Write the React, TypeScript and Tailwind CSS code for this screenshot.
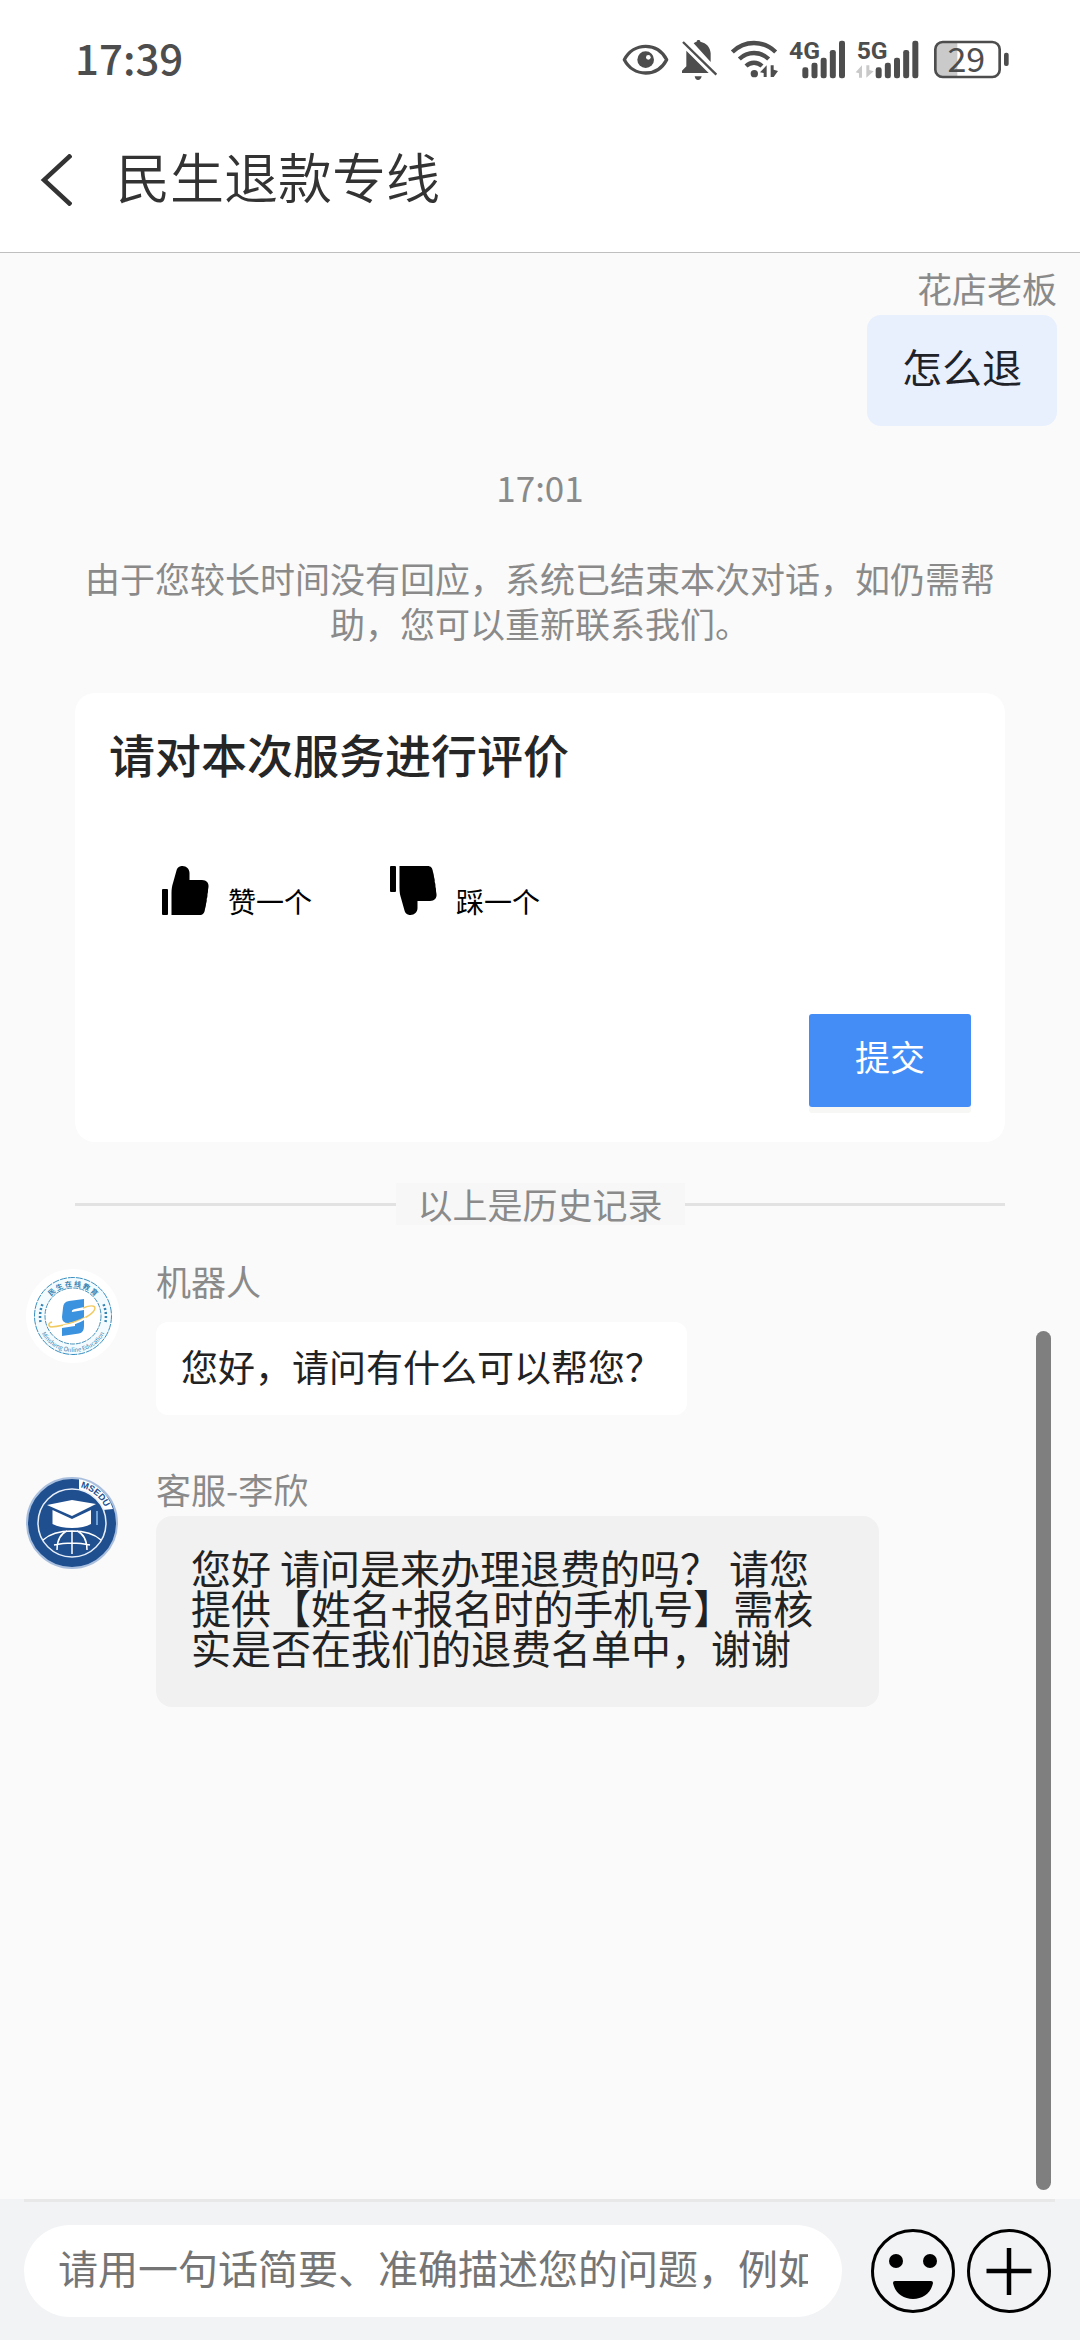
import { ReactNode } from 'react';
import clsx from 'clsx';

const FONT = "font-['Noto_Sans_CJK_SC',sans-serif]";

function EyeIcon() {
  return (
    <svg width="46" height="40" viewBox="69 60 138 120" className="overflow-visible">
      <path d="M73 119 C86 94 110 79 137 79 C164 79 187 94 200 119 C187 144 164 159 137 159 C110 159 86 144 73 119 Z" fill="none" stroke="#4d4d4d" strokeWidth="10" strokeLinejoin="round" />
      <circle cx="137" cy="119" r="25" fill="#4d4d4d" />
      <circle cx="145" cy="112" r="7" fill="#fff" />
    </svg>
  );
}

function MutedBellIcon() {
  return (
    <svg width="38" height="40" viewBox="243 60 114 120" fill="#4d4d4d">
      <path d="M281 70 C284 67 287 66 290 65 C290 58 301 58 301 65 C320 69 331 82 332 100 V126 Z" />
      <path d="M259 92 L326 159 H246 V152 L259 139 Z" />
      <path d="M284 169 H305 C303 177 300 180 294 180 C288 180 286 177 284 169 Z" />
      <path d="M249 66 L349 164" stroke="#4d4d4d" strokeWidth="7" />
    </svg>
  );
}

function WifiIcon() {
  return (
    <svg width="46" height="40" viewBox="393 60 138 120" fill="none" stroke="#4d4d4d" strokeWidth="13" className="overflow-visible">
      <path d="M397 96 C434 60 490 60 527 96" />
      <path d="M418 117 C443 93 481 93 506 117" />
      <path d="M438 138 C452 125 472 125 486 138" />
      <circle cx="463" cy="161" r="11" fill="#4d4d4d" stroke="none" />
      <path d="M480 157 L500 136 V171 H491 V159 Z M512 136 V171 H521 L534 153 L521 149 V136 Z" fill="#4d4d4d" stroke="none" />
    </svg>
  );
}

function SignalBars({ x }: { x: number }) {
  return (
    <g fill="#4d4d4d">
      {[142, 128, 113, 90, 62].map((top, i) => (
        <rect key={top} x={x + i * 27.5} y={top} width="18" height={175 - top} rx="7" />
      ))}
    </g>
  );
}

function Signal4G() {
  return (
    <svg width="56" height="40" viewBox="567 60 168 120" className="overflow-visible">
      <text x="567" y="116" fontSize="74" fontWeight="700" fill="#4d4d4d" className="font-['Liberation_Sans_Narrow','Roboto',sans-serif]">4G</text>
      <SignalBars x={607} />
    </svg>
  );
}

function Signal5G() {
  return (
    <svg width="65" height="40" viewBox="771 60 195 120" className="overflow-visible">
      <text x="770" y="116" fontSize="74" fontWeight="700" fill="#4d4d4d" className="font-['Liberation_Sans_Narrow','Roboto',sans-serif]">5G</text>
      <path d="M767 157 L786 136 V173 H777 V160 Z M799 136 V173 L821 154 L808 150 V136 Z" fill="#c9c9c9" />
      <SignalBars x={827} />
    </svg>
  );
}

function BatteryIcon() {
  return (
    <svg width="75" height="40" viewBox="1002 60 225 120" className="overflow-visible">
      <path d="M1028 64 H1072 V172 H1028 Q1005 172 1005 149 V87 Q1005 64 1028 64 Z" fill="#cacaca" />
      <rect x="1006" y="66" width="193" height="105" rx="22" fill="none" stroke="#4d4d4d" strokeWidth="8" />
      <rect x="1212" y="98" width="14" height="40" rx="6" fill="#4d4d4d" />
      <text x="1099" y="155" fontSize="102" textAnchor="middle" fill="#4d4d4d" className="font-['Noto_Sans_CJK_SC',sans-serif]">29</text>
    </svg>
  );
}

function StatusBar() {
  return (
    <div className="flex h-30 items-center justify-between bg-white pl-[75px] pr-[71px]">
      <span className="pb-1.5 text-[42px] leading-10 font-medium text-[#4d4d4d]">17:39</span>
      <div className="flex items-center gap-3">
        <EyeIcon />
        <MutedBellIcon />
        <WifiIcon />
        <Signal4G />
        <Signal5G />
        <BatteryIcon />
      </div>
    </div>
  );
}

function Header() {
  return (
    <header className="flex items-center border-b border-[#bfbfbf] bg-white pb-5 pl-10">
      <button type="button" aria-label="返回" className="pt-2">
        <svg width="32" height="52" viewBox="0 0 32 52" fill="none" stroke="#333" strokeWidth="4.500">
          <path d="M31 1 L4 26 L31 51" />
        </svg>
      </button>
      <h1 className="pl-11 text-[54px] leading-[112px] font-[350] text-[#333]">民生退款专线</h1>
    </header>
  );
}

function ThumbIcon({ down }: { down?: boolean }) {
  return (
    <svg width="47" height="49" viewBox="0 0 47 49" className={clsx(down && '-scale-y-100')}>
      <rect x="0" y="23" width="6" height="26" rx="1" />
      <path d="M9.5 49 V27 C9.5 23 10 20 11 17 L14.5 4.5 C15.5 1 18 0 20.5 0 C24.5 0 27.5 3 27.5 7 V14 H40 C44.5 14 47 17 46.5 21 L46 24 C46 26 46 26.5 45.5 28 C45.5 30 45.5 31 44.7 33 C45 35 44.5 36 44 38 C44 40 43.5 41 43 43 C42.5 47 41 49 37.5 49 Z" />
    </svg>
  );
}

function RatingCard() {
  return (
    <form className="mt-12 flex flex-col rounded-[20px] bg-white px-[34px] pt-[30px] pb-[35px]">
      <h2 className="text-[46px] leading-[60px] font-medium text-[#262626]">请对本次服务进行评价</h2>
      <div className="mt-[83px] flex gap-[78px] pl-[53px] text-[28px] leading-7 text-black">
        <label className="flex items-end gap-[19px]">
          <input type="radio" name="rating" value="up" className="sr-only" />
          <ThumbIcon />
          赞一个
        </label>
        <label className="flex items-end gap-[19px]">
          <input type="radio" name="rating" value="down" className="sr-only" />
          <ThumbIcon down />
          踩一个
        </label>
      </div>
      <button type="submit" className="mt-[99px] h-[93px] self-end rounded-[3px] bg-[#448df7] px-[46px] pb-2.5 text-[35px] leading-10 text-white shadow-[0_6px_0_#f7f7f5]">
        提交
      </button>
    </form>
  );
}

function RobotAvatar() {
  return (
    <svg width="94" height="94" viewBox="-47 -47 94 94" className="shrink-0">
      <circle r="47" fill="#fff" />
      <circle r="38.5" fill="#f3fbfe" stroke="#3a8fc0" strokeWidth="1" strokeDasharray="7 1" />
      <circle r="28" fill="#fff" stroke="#4a93bb" strokeWidth="1" strokeDasharray="5 1" />
      <path id="seal-top" d="M-29.5 0 A29.5 29.5 0 0 1 29.5 0" fill="none" />
      <path id="seal-bottom" d="M-36 0 A36 36 0 0 0 36 0" fill="none" />
      <path d="M-32.5 6 A33 33 0 0 1 -30 -13 M32.5 6 A33 33 0 0 0 30 -13" fill="none" stroke="#3585b5" strokeWidth="2.5" strokeDasharray="2 2" />
      <text fontSize="7" fontWeight="700" fill="#3585b5" textAnchor="middle">
        <textPath href="#seal-top" startOffset="50%">民 生 在 线 教 育</textPath>
      </text>
      <text fontSize="6" fill="#3585b5" textAnchor="middle">
        <textPath href="#seal-bottom" startOffset="50%">Minsheng Online Education</textPath>
      </text>
      <path d="M-10 -8 Q-10 -14 -4 -15 L11 -17 V-9 L2 -7 Q-2 -6 -1 -4 L11 -6 V10 Q11 17 6 17.5 L-11 20 V12 L2 10 V6 L-5 7 Q-11 7 -11 1 Z" fill="#3b92de" />
      <path d="M10 -8 C20 -12 25 -10 20 -4 C14 3 -8 10 -22 11 C-25 10 -25 7 -21 6" fill="none" stroke="#f1cb62" strokeWidth="1.5" />
      <path d="M-10 10 C0 9 8 5 13 2" fill="none" stroke="#fff" strokeWidth="2" />
    </svg>
  );
}

function AgentAvatar() {
  return (
    <svg width="92" height="92" viewBox="-46 -46 92 92" className="shrink-0">
      <circle r="45" fill="#204f90" stroke="#a9bfdd" strokeWidth="2" />
      <path d="M7 -44 A44 44 0 0 1 41 -14 L31 -13 A34 34 0 0 0 7 -33 Z" fill="#fff" />
      <circle r="34" fill="#204f90" stroke="#e6eef8" strokeWidth="1.5" />
      <path id="badge-arc" d="M7.5 -35.8 A36.5 36.5 0 0 1 36.5 0" fill="none" />
      <text fontSize="9" fontWeight="700" fill="#204f90" className="font-['Liberation_Sans',sans-serif]">
        <textPath href="#badge-arc" startOffset="1">MSEDU</textPath>
      </text>
      <path d="M-25 -18 L0 -23 L24 -19 L0 -7 Z" fill="#fff" />
      <path d="M-19.5 -13 L0 -4 L19 -13 V1 Q12 5 0 5 Q-12 5 -19.5 1 Z" fill="#fff" />
      <path d="M25 -12 V2" stroke="#6fa3d8" strokeWidth="2" />
      <g fill="none" stroke="#fff" strokeWidth="1.5">
        <path d="M-29 17 C-16 5 16 5 29 17 M-18 22 Q0 18 18 22 M0 8 V31 M-15 27 C-15 18 -12 11 -5 8 M15 27 C15 18 12 11 5 8" />
      </g>
    </svg>
  );
}

interface MessageProps {
  avatar: ReactNode;
  name: string;
  children: ReactNode;
  className?: string;
}

function Message({ avatar, name, children, className }: MessageProps) {
  return (
    <div className={clsx('flex pl-0.5', className)}>
      <div className="w-[130px] shrink-0 pt-2">{avatar}</div>
      <div className="flex flex-col items-start">
        <div className="text-[35px] leading-10 text-[#8a8a8a]">{name}</div>
        {children}
      </div>
    </div>
  );
}

function Composer() {
  return (
    <footer className="bg-[#f2f3f5] pr-[29px] pb-[23px] pl-6">
      <div className="-mr-1 h-[3px] bg-[#e8e8e9]" />
      <div className="flex items-center pt-[23px]">
        <input
          type="text"
          aria-label="请输入问题"
          placeholder="请用一句话简要、准确描述您的问题，例如"
          className="mr-[29px] h-[92px] min-w-0 flex-1 rounded-full bg-white px-[34px] pb-2 text-[40px] text-[#222] placeholder:text-[#757575]"
        />
        <button type="button" aria-label="表情" className="mr-3">
          <svg width="84" height="84" viewBox="0 0 84 84">
            <circle cx="42" cy="42" r="40.5" fill="none" stroke="#000" strokeWidth="3" />
            <circle cx="25" cy="32" r="7" />
            <circle cx="59" cy="32" r="7" />
            <path d="M22 54 Q22 52 24 52 H60 Q62 52 62 54 C60 64 52 70 42 70 C32 70 24 64 22 54 Z" />
          </svg>
        </button>
        <button type="button" aria-label="更多">
          <svg width="84" height="84" viewBox="0 0 84 84" fill="none" stroke="#000">
            <circle cx="42" cy="42" r="40.5" strokeWidth="3" />
            <path d="M42 19 V66 M19.5 42 H64.5" strokeWidth="4.5" />
          </svg>
        </button>
      </div>
    </footer>
  );
}

export default function App() {
  return (
    <div className={clsx('flex min-h-screen flex-col bg-[#fafafa]', FONT)}>
      <StatusBar />
      <Header />

      <main className="relative flex-1 px-6">
        <div className="-mr-px flex flex-col items-end pt-[15px]">
          <div className="text-[35px] leading-10 text-[#8a8a8a]">花店老板</div>
          <p className="mt-[7px] rounded-[14px] bg-[#e8f0fe] px-[35px] pt-[31px] pb-10 text-[40px] leading-10 text-[#1f2329]">怎么退</p>
        </div>

        <div className="px-[51px]">
          <div className="pt-9 text-center text-[35px] leading-[50px] text-[#8a8a8a]">17:01</div>
          <p className="mt-[43px] text-center text-[35px] leading-[45px] text-[#8a8a8a]">
            由于您较长时间没有回应，系统已结束本次对话，如仍需帮助，您可以重新联系我们。
          </p>
          <RatingCard />

          <div className="mt-[41px] flex items-center text-[35px] leading-[42px] text-[#8a8a8a]">
            <div className="h-[3px] flex-1 bg-[#e2e2e2]" />
            <span className="bg-[#f7f7f7] px-[22px]">以上是历史记录</span>
            <div className="h-[3px] flex-1 bg-[#e2e2e2]" />
          </div>
        </div>

        <Message avatar={<RobotAvatar />} name="机器人" className="mt-9">
          <p className="mt-[21px] rounded-xl bg-white px-[25px] pt-[24px] pb-[29px] text-[37px] leading-10 text-[#222]">
            您好，请问有什么可以帮您？
          </p>
        </Message>

        <Message avatar={<AgentAvatar />} name="客服-李欣" className="mt-[54px]">
          <p className="mt-[7px] max-w-[723px] rounded-2xl bg-[#f1f1f1] px-[35px] pt-[31px] pb-10 text-[40px] leading-10 text-[#222]">
            您好 请问是来办理退费的吗？ 请您提供【姓名+报名时的手机号】需核实是否在我们的退费名单中，谢谢
          </p>
        </Message>

        {/* scroll thumb */}
        <div className="absolute right-[29px] bottom-[9px] h-[859px] w-[15px] rounded-full bg-[#7f7f7f]" />
      </main>

      <Composer />
    </div>
  );
}
